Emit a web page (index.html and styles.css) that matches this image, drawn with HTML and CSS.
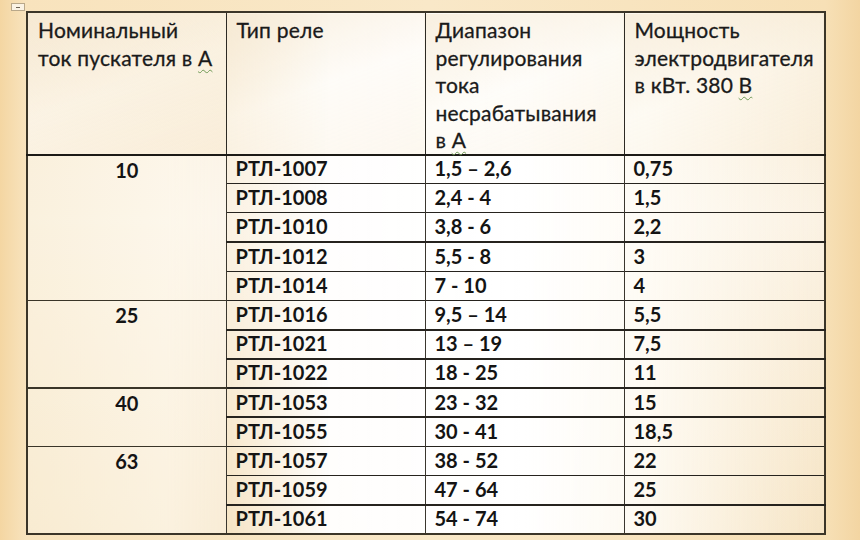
FILE: index.html
```html
<!DOCTYPE html>
<html lang="ru">
<head>
<meta charset="utf-8">
<link rel="stylesheet" href="styles.css">
</head>
<body>
<div class="page">
  <div class="handle"><span></span></div>
  <table class="relay">
    <colgroup>
      <col class="c1"><col class="c2"><col class="c3"><col class="c4">
    </colgroup>
    <thead>
      <tr>
        <th>Номинальный<br>ток пускателя в <span class="sp">А</span></th>
        <th>Тип реле</th>
        <th>Диапазон<br>регулирования<br>тока<br>несрабатывания<br>в <span class="sp">А</span></th>
        <th>Мощность<br>электродвигателя<br>в кВт. 380 <span class="sp">В</span></th>
      </tr>
    </thead>
    <tbody>
      <tr class="thick"><td class="nom" rowspan="5">10</td><td>РТЛ-1007</td><td>1,5 – 2,6</td><td>0,75</td></tr>
      <tr><td>РТЛ-1008</td><td>2,4 - 4</td><td>1,5</td></tr>
      <tr><td>РТЛ-1010</td><td>3,8 - 6</td><td>2,2</td></tr>
      <tr class="thick"><td>РТЛ-1012</td><td>5,5 - 8</td><td>3</td></tr>
      <tr><td>РТЛ-1014</td><td>7 - 10</td><td>4</td></tr>
      <tr><td class="nom" rowspan="3">25</td><td>РТЛ-1016</td><td>9,5 – 14</td><td>5,5</td></tr>
      <tr class="thick"><td>РТЛ-1021</td><td>13 – 19</td><td>7,5</td></tr>
      <tr class="thick"><td>РТЛ-1022</td><td>18 - 25</td><td>11</td></tr>
      <tr class="thick"><td class="nom" rowspan="2">40</td><td>РТЛ-1053</td><td>23 - 32</td><td>15</td></tr>
      <tr class="thick"><td>РТЛ-1055</td><td>30 - 41</td><td>18,5</td></tr>
      <tr><td class="nom" rowspan="3">63</td><td>РТЛ-1057</td><td>38 - 52</td><td>22</td></tr>
      <tr><td>РТЛ-1059</td><td>47 - 64</td><td>25</td></tr>
      <tr class="thick"><td>РТЛ-1061</td><td>54 - 74</td><td>30</td></tr>
    </tbody>
  </table>
</div>
</body>
</html>
```
FILE: styles.css
```css
html, body {
  margin: 0;
  padding: 0;
}
body {
  width: 860px;
  height: 540px;
  overflow: hidden;
  background: linear-gradient(to right, #f4d6a2 0%, #f8e3bd 3%, #f9e8c8 50%, #f7e0b6 96%, #f3d5a2 100%);
  font-family: Lato, "Open Sans", "Liberation Sans", sans-serif;
  color: #161616;
}
.page {
  position: relative;
  padding: 11px 0 0 26px;
}
.handle {
  position: absolute;
  left: 11px;
  top: 3px;
  width: 12px;
  height: 6px;
  border: 1px solid #b9a88a;
  background: #fbf3e4;
  display: flex;
  align-items: center;
  justify-content: center;
}
.handle span {
  width: 4px;
  height: 1px;
  background: #6d6456;
}
.relay {
  border-collapse: collapse;
  table-layout: fixed;
  width: 800px;
  background:
    linear-gradient(to right, rgba(255,255,255,0) 0%, rgba(255,255,255,0) 25%, rgba(255,255,255,0.95) 38%, #ffffff 62%, rgba(255,253,248,0.85) 78%, rgba(247,225,186,0) 100%),
    linear-gradient(to bottom, #f8ebd4 0%, #fbf2e3 40%, #f6e4c4 100%);
  border: 2px solid #3b3528;
}
.c1 { width: 199px; }
.c2 { width: 199px; }
.c3 { width: 199px; }
.c4 { width: 201px; }
thead th {
  height: 141px;
  box-sizing: border-box;
  vertical-align: top;
  text-align: left;
  white-space: nowrap;
  font-weight: 400;
  font-size: 21px;
  line-height: 27.5px;
  padding: 3px 4px 0 10px;
  border-left: 1px solid #2d2a24;
  border-bottom: 2px solid #1c1a16;
  color: #1a1a1a;
  -webkit-text-stroke: 0.3px #1a1a1a;
  letter-spacing: 0.2px;
  background: linear-gradient(160deg, rgba(245,232,210,0.7) 0%, rgba(253,249,240,0.4) 50%, rgba(247,232,205,0.3) 100%);
}
thead th:first-child { border-left: none; }
.sp {
  text-decoration: underline wavy #6f9a55;
  text-decoration-thickness: 1px;
  text-underline-offset: 3px;
}
tbody tr { height: 29.2px; }
tbody td {
  height: 29.2px;
  box-sizing: border-box;
  padding: 0 8px 2px 9px;
  font-weight: 700;
  font-size: 20px;
  line-height: 24px;
  border-top: 1px solid #26231e;
  border-left: 1px solid #3a362e;
  vertical-align: middle;
  color: #141414;
}
tbody tr.thick td { border-top-width: 2px; }
tbody td.nom {
  text-align: center;
  vertical-align: top;
  border-left: none;
  border-top: 1px solid #3a3528;
  padding: 2px 0 0 0;
  background: linear-gradient(to right, rgba(250,240,218,0.6) 0%, rgba(254,250,240,0.6) 70%, rgba(255,255,255,0.3) 100%);
}
```
